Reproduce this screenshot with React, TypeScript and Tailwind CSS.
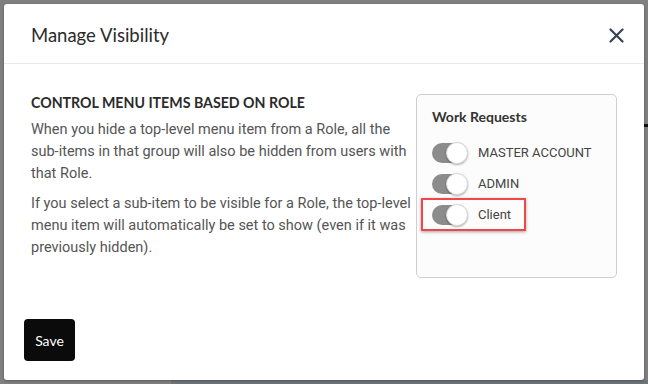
import { useState } from "react";

const roles = ["MASTER ACCOUNT", "ADMIN", "Client"];

export default function App() {
  const [on, setOn] = useState<Record<string, boolean>>({
    "MASTER ACCOUNT": true,
    ADMIN: true,
    Client: true,
  });

  return (
    <div className="relative w-[648px] h-[384px] bg-[#808080] p-[4px] overflow-hidden">
      {/* page underneath the overlay */}
      <div className="absolute right-0 top-[124px] w-[4px] h-[3px] bg-[#111]" />
      <div className="absolute left-[171px] right-0 bottom-0 h-[4px] bg-[#6d767a]" />

      <div className="relative flex flex-col h-[376px] bg-white rounded-[3px] shadow-[0_1px_3px_rgba(0,0,0,0.3)]">
        {/* header */}
        <div className="flex items-center justify-between h-[60px] pl-[27px] pr-[16px] border-b border-[#e6e9ee]">
          <h2 className="text-[18.5px] text-[#2b2b2b] font-['Lato',sans-serif] pt-[4px]">Manage Visibility</h2>
          <button className="w-[24px] h-[24px] flex items-center justify-center mt-[3px]">
            <svg width="15" height="15" viewBox="0 0 15 15" fill="none">
              <path d="M1.5 1.5L13.5 13.5M13.5 1.5L1.5 13.5" stroke="#3a4350" strokeWidth="2.2" strokeLinecap="round" />
            </svg>
          </button>
        </div>

        {/* body */}
        <div className="flex pt-[30px] pl-[27px] pr-[27px]">
          <div className="w-[385px] font-['Roboto',sans-serif] text-[14.5px] leading-[22px] text-[#555]">
            <h3 className="font-['Lato',sans-serif] font-bold text-[14.2px] text-[#2b2b2b] leading-[18px] mb-[7px]">
              CONTROL MENU ITEMS BASED ON ROLE
            </h3>
            <p className="mb-[8px]">
              When you hide a top-level menu item from a Role, all the sub-items in that group will also be hidden from users with that Role.
            </p>
            <p>
              If you select a sub-item to be visible for a Role, the top-level menu item will automatically be set to show (even if it was previously hidden).
            </p>
          </div>

          <div className="ml-auto w-[201px] h-[184px] border border-[#cfcfcf] rounded-[5px] bg-[#fcfcfc] pl-[15px] pt-[12px]">
            <div className="font-['Lato',sans-serif] font-bold text-[14px] text-[#333] leading-[20px] mb-[15px]">Work Requests</div>
            <div className="flex flex-col gap-[10px]">
              {roles.map((r) => (
                <div key={r} className="relative flex items-center gap-[11px] h-[21px]">
                  {r === "Client" && (
                    <div className="absolute -left-[11px] -top-[6px] w-[105px] h-[33px] border-2 border-[#f04848] shadow-[0_1px_3px_rgba(0,0,0,0.35)]" />
                  )}
                  <button
                    onClick={() => setOn({ ...on, [r]: !on[r] })}
                    className={`relative w-[35px] h-[20px] rounded-full ${on[r] ? "bg-[#8c8c8c]" : "bg-[#cfcfcf]"}`}
                  >
                    <span
                      className={`absolute top-[-1px] w-[22px] h-[22px] rounded-full bg-white border border-[#d8d8d8] shadow-[0_1px_2px_rgba(0,0,0,0.3)] ${on[r] ? "right-[-1px]" : "left-[-1px]"}`}
                    />
                  </button>
                  <span className="font-['Roboto',sans-serif] text-[13px] text-[#444]">{r}</span>
                </div>
              ))}
            </div>
          </div>
        </div>

        {/* footer */}
        <div className="mt-auto pl-[20px] pb-[19px]">
          <button className="w-[51px] h-[42px] bg-[#0b0b0b] rounded-[4px] text-white text-[14px] font-['Lato',sans-serif]">
            Save
          </button>
        </div>
      </div>
    </div>
  );
}
